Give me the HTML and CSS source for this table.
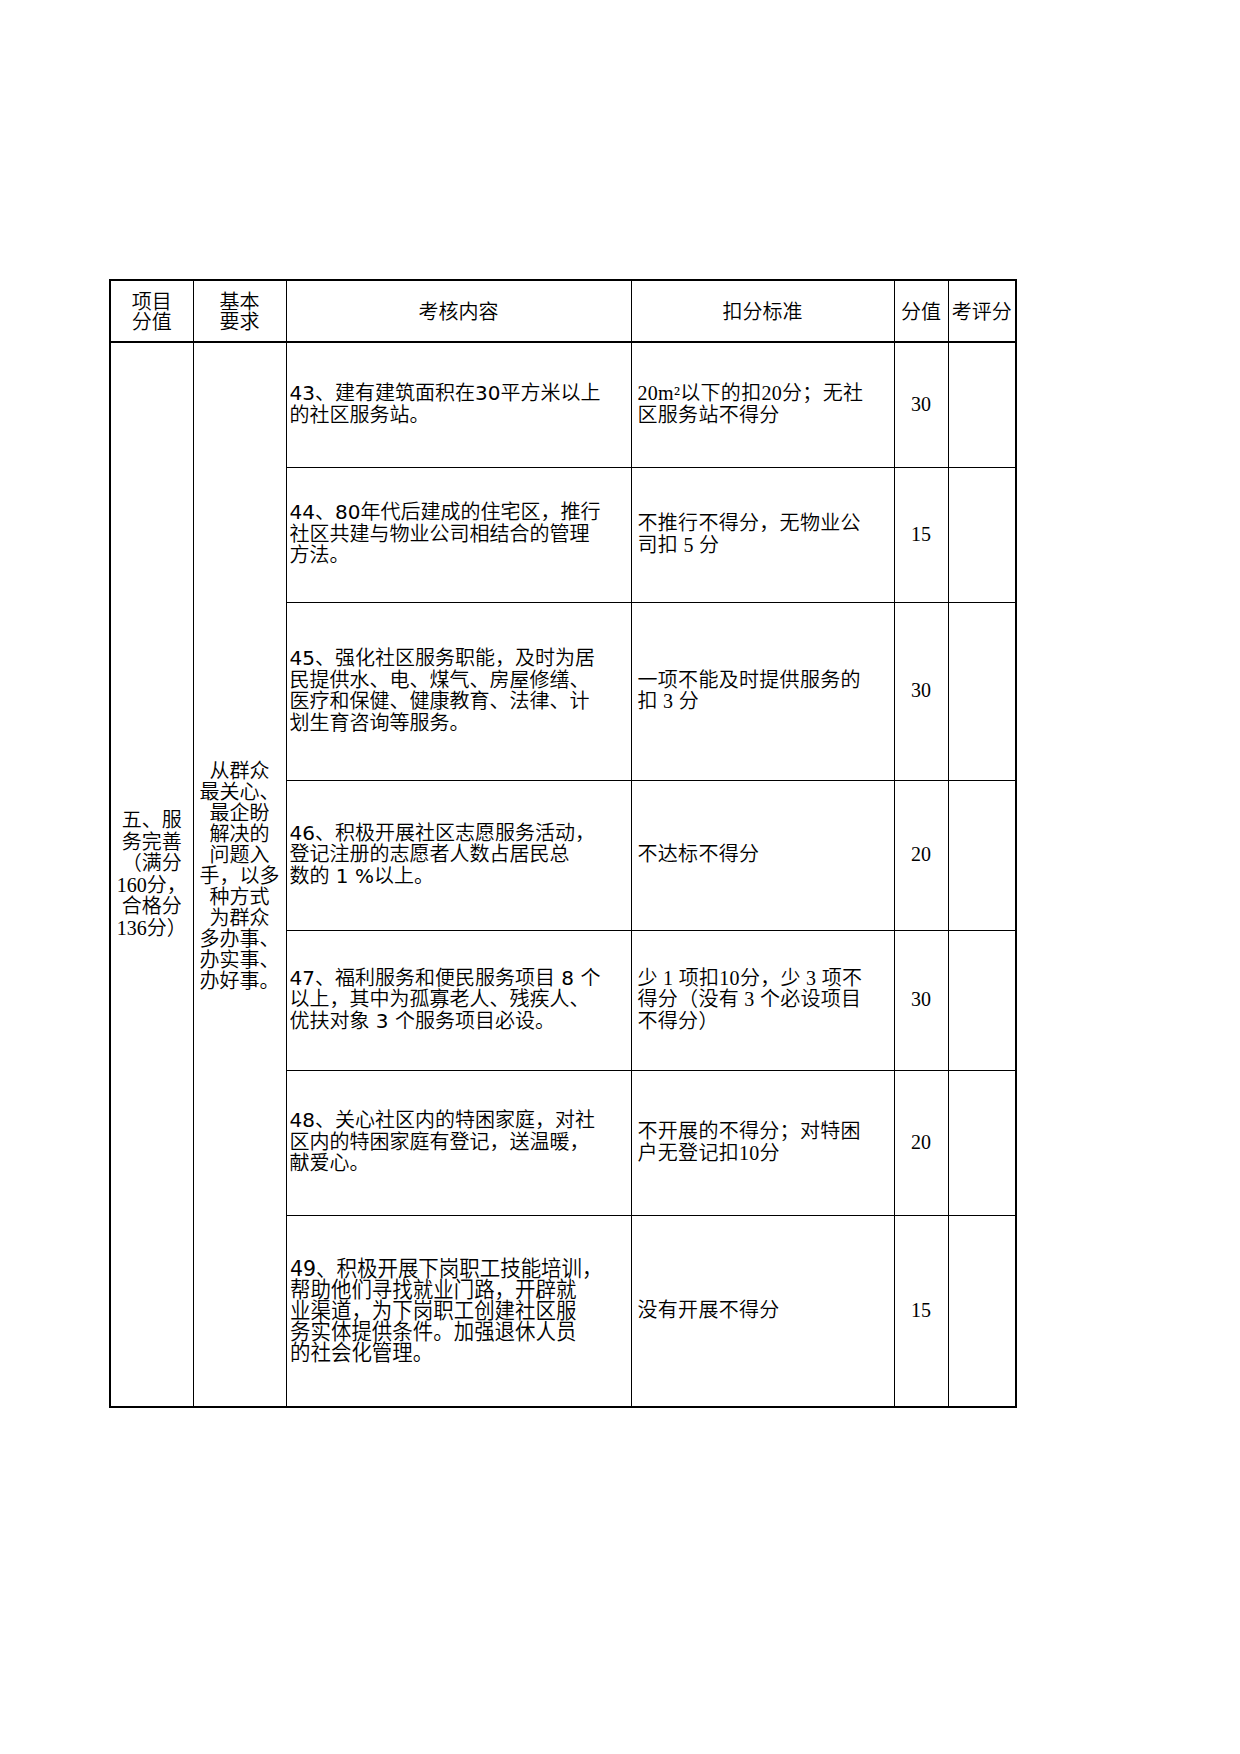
FILE: index.html
```html
<!DOCTYPE html>
<html lang="zh-CN">
<head>
<meta charset="utf-8">
<title>社区服务考核表</title>
<link rel="stylesheet" href="styles.css">
</head>
<body>
<table class="sheet">
<colgroup>
<col class="c1"><col class="c2"><col class="c3"><col class="c4"><col class="c5"><col class="c6">
</colgroup>
<thead>
<tr class="head">
<th class="two">项目<br>分值</th>
<th class="two">基本<br>要求</th>
<th>考核内容</th>
<th>扣分标准</th>
<th>分值</th>
<th>考评分</th>
</tr>
</thead>
<tbody>
<tr class="r1">
<td rowspan="7" class="cat">五、服<br>务完善<br>（满分<br>160分，<br>合格分<br>136分）</td>
<td rowspan="7" class="req">从群众<br>最关心、<br>最企盼<br>解决的<br>问题入<br>手，以多<br>种方式<br>为群众<br>多办事、<br>办实事、<br>办好事。</td>
<td class="content"><span class="num">43</span>、建有建筑面积在<span class="num">30</span>平方米以上<br>的社区服务站。</td>
<td class="rule">20m²以下的扣20分；无社<br>区服务站不得分</td>
<td class="score">30</td>
<td class="eval"></td>
</tr>
<tr class="r2">
<td class="content"><span class="num">44</span>、<span class="num">80</span>年代后建成的住宅区，推行<br>社区共建与物业公司相结合的管理<br>方法。</td>
<td class="rule">不推行不得分，无物业公<br>司扣 5 分</td>
<td class="score">15</td>
<td class="eval"></td>
</tr>
<tr class="r3">
<td class="content"><span class="num">45</span>、强化社区服务职能，及时为居<br>民提供水、电、煤气、房屋修缮、<br>医疗和保健、健康教育、法律、计<br>划生育咨询等服务。</td>
<td class="rule">一项不能及时提供服务的<br>扣 3 分</td>
<td class="score">30</td>
<td class="eval"></td>
</tr>
<tr class="r4">
<td class="content"><span class="num">46</span>、积极开展社区志愿服务活动，<br>登记注册的志愿者人数占居民总<br>数的 <span class="num">1 %</span>以上。</td>
<td class="rule">不达标不得分</td>
<td class="score">20</td>
<td class="eval"></td>
</tr>
<tr class="r5">
<td class="content"><span class="num">47</span>、福利服务和便民服务项目 <span class="num">8</span> 个<br>以上，其中为孤寡老人、残疾人、<br>优扶对象 <span class="num">3</span> 个服务项目必设。</td>
<td class="rule">少 1 项扣10分，少 3 项不<br>得分（没有 3 个必设项目<br>不得分）</td>
<td class="score">30</td>
<td class="eval"></td>
</tr>
<tr class="r6">
<td class="content"><span class="num">48</span>、关心社区内的特困家庭，对社<br>区内的特困家庭有登记，送温暖，<br>献爱心。</td>
<td class="rule">不开展的不得分；对特困<br>户无登记扣10分</td>
<td class="score">20</td>
<td class="eval"></td>
</tr>
<tr class="r7">
<td class="content"><span class="condensed"><span class="num">49</span>、积极开展下岗职工技能培训，<br>帮助他们寻找就业门路，开辟就<br>业渠道，为下岗职工创建社区服<br>务实体提供条件。加强退休人员<br>的社会化管理。</span></td>
<td class="rule">没有开展不得分</td>
<td class="score">15</td>
<td class="eval"></td>
</tr>
</tbody>
</table>
</body>
</html>
```

FILE: styles.css
```css
html, body {
  margin: 0;
  padding: 0;
  background: #ffffff;
}

body {
  width: 1240px;
  min-height: 1754px;
}

.sheet {
  border-collapse: collapse;
  table-layout: fixed;
  width: 906px;
  margin: 279px 0 0 109px;
  border: 2px solid #000;
  color: #000;
  font-family: "Noto Sans CJK SC", sans-serif;
  font-size: 20px;
  font-weight: 350;
  line-height: 21.5px;
}

.c1 { width: 83px; }
.c2 { width: 93px; }
.c3 { width: 345px; }
.c4 { width: 263px; }
.c5 { width: 54px; }
.c6 { width: 68px; }

.sheet th,
.sheet td {
  border: 1px solid #000;
  padding: 0;
  vertical-align: middle;
  text-align: center;
  font-weight: 350;
  white-space: nowrap;
  overflow: visible;
}

.head th {
  border-bottom: 2px solid #000;
}

.head .two {
  line-height: 20px;
}

.head { height: 62px; }
.r1 { height: 125px; }
.r2 { height: 135px; }
.r3 { height: 178px; }
.r4 { height: 150px; }
.r5 { height: 140px; }
.r6 { height: 145px; }
.r7 { height: 192px; }

.sheet .cat {
  font-family: "Liberation Serif", "Noto Sans CJK SC", serif;
}

.sheet .req {
  line-height: 21px;
}

.sheet .content {
  text-align: left;
  padding-left: 3px;
  font-family: "DejaVu Sans", "Noto Sans CJK SC", sans-serif;
}

.sheet .content .num {
  font-weight: 400;
}

.sheet .rule {
  text-align: left;
  padding-left: 6px;
  font-family: "Liberation Serif", "Noto Sans CJK SC", serif;
  letter-spacing: 0.3px;
}

.sheet .score {
  font-family: "Liberation Serif", serif;
}

.condensed {
  display: inline-block;
  font-size: 22px;
  line-height: 21px;
  transform: scaleX(0.93);
  transform-origin: left center;
}
```
